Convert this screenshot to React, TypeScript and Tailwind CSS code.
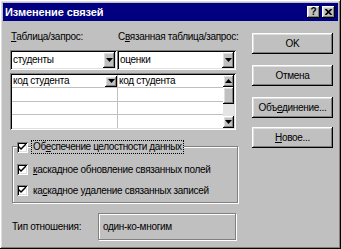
import React from "react";

const raised =
  "shadow-[inset_-1px_-1px_#000,inset_1px_1px_#fff,inset_-2px_-2px_#808080,inset_2px_2px_#dfdfdf]";
const sunken =
  "shadow-[inset_1px_1px_#808080,inset_-1px_-1px_#fff,inset_2px_2px_#000,inset_-2px_-2px_#dfdfdf]";

function Down() {
  return (
    <svg width="7" height="4" viewBox="0 0 7 4">
      <polygon points="0,0 7,0 3.5,4" fill="#000" />
    </svg>
  );
}
function Up() {
  return (
    <svg width="7" height="4" viewBox="0 0 7 4">
      <polygon points="0,4 7,4 3.5,0" fill="#000" />
    </svg>
  );
}

function DropBtn({ h }: { h: string }) {
  return (
    <div className={`w-[12px] ${h} shrink-0 bg-[#c0c0c0] flex items-center justify-center ${raised}`}>
      <Down />
    </div>
  );
}

function Check() {
  return (
    <div className={`w-[11px] h-[11px] shrink-0 bg-white flex items-center justify-center ${sunken}`}>
      <svg width="7" height="7" viewBox="0 0 7 7">
        <path d="M0 2 L0 4 L2 6 L7 1 L7 -1 L2 4 Z" fill="#000" />
      </svg>
    </div>
  );
}

function Btn({ children, cls = "" }: { children: React.ReactNode; cls?: string }) {
  return (
    <div className={`w-[81px] h-[21px] bg-[#c0c0c0] flex items-center justify-center whitespace-nowrap ${raised} ${cls}`}>
      {children}
    </div>
  );
}

export default function App() {
  return (
    <div
      className={`w-[341px] h-[249px] bg-[#c0c0c0] text-black text-[10px] tracking-[-0.3px] leading-none ${raised} p-[3px] flex flex-col`}
      style={{ fontFamily: '"Liberation Sans", Arial, sans-serif' }}
    >
      {/* Title bar */}
      <div className="h-[18px] bg-[#000080] flex items-center pl-[2px] pr-[3px]">
        <span className="text-white font-bold text-[11px] tracking-[-0.1px] flex-1 whitespace-nowrap">Изменение связей</span>
        <div className={`w-[13px] h-[12px] bg-[#c0c0c0] flex items-center justify-center font-bold text-[10px] tracking-normal ${raised}`}>
          ?
        </div>
        <div className={`ml-[2px] w-[13px] h-[12px] bg-[#c0c0c0] flex items-center justify-center ${raised}`}>
          <svg width="7" height="6" viewBox="0 0 7 6">
            <path d="M0.5 0 L6.5 6 M6.5 0 L0.5 6" stroke="#000" strokeWidth="1.6" />
          </svg>
        </div>
      </div>

      <div className="flex pl-[7px]">
        {/* Left column */}
        <div className="w-[226px] flex flex-col">
          <div className="mt-[10px] h-[12px] flex items-center whitespace-nowrap">
            <span className="w-[107px] shrink-0 pl-[1px]">
              <u>Т</u>аблица/запрос:
            </span>
            <span className="pl-[1px]">
              С<u>в</u>язанная таблица/запрос:
            </span>
          </div>

          <div className="mt-[7px] flex">
            <div className={`w-[107px] h-[20px] bg-white flex items-center pl-[3px] pr-[2px] ${sunken}`}>
              <span className="flex-1">студенты</span>
              <DropBtn h="h-[16px]" />
            </div>
            <div className={`w-[119px] h-[20px] bg-white flex items-center pl-[3px] pr-[2px] ${sunken}`}>
              <span className="flex-1">оценки</span>
              <DropBtn h="h-[16px]" />
            </div>
          </div>

          {/* Grid */}
          <div className={`mt-[3px] h-[57px] bg-white p-[2px] flex ${sunken}`}>
            <div className="w-[105px] flex flex-col">
              <div className="h-[12px] flex items-center pl-[1px] border-b border-[#c0c0c0] box-content">
                <span className="flex-1 whitespace-nowrap">код студента</span>
                <DropBtn h="h-[11px]" />
              </div>
              <div className="h-[14px] border-b border-[#c0c0c0]" />
              <div className="h-[13px] border-b border-[#c0c0c0]" />
            </div>
            <div className="w-[1px] bg-[#c0c0c0]" />
            <div className="w-[105px] flex flex-col">
              <div className="h-[12px] flex items-center pl-[1px] border-b border-[#c0c0c0] box-content">
                <span className="whitespace-nowrap">код студента</span>
              </div>
              <div className="h-[14px] border-b border-[#c0c0c0]" />
              <div className="h-[13px] border-b border-[#c0c0c0]" />
            </div>
            <div className="w-[11px] flex flex-col bg-[#e4e4e4]">
              <div className={`h-[12px] bg-[#c0c0c0] flex items-center justify-center ${raised}`}>
                <Up />
              </div>
              <div className={`h-[17px] bg-[#c0c0c0] ${raised}`} />
              <div className="flex-1" />
              <div className={`h-[12px] bg-[#c0c0c0] flex items-center justify-center ${raised}`}>
                <Down />
              </div>
            </div>
          </div>

          {/* Group box */}
          <div className="mt-[16px] ml-[2px] w-[226px] h-[57px] border border-[#808080] shadow-[inset_1px_1px_#fff,1px_1px_#fff] flex flex-col pl-[4px] whitespace-nowrap">
            <div className="-mt-[7px] h-[14px] flex items-center">
              <Check />
              <span className="ml-[3px] h-[14px] px-[1px] flex items-center bg-[#c0c0c0] border border-dotted border-black tracking-[-0.4px]">
                Об<u>е</u>спечение целостности данных
              </span>
            </div>
            <div className="mt-[10px] h-[11px] flex items-center">
              <Check />
              <span className="ml-[5px]">
                <u>к</u>аскадное обновление связанных полей
              </span>
            </div>
            <div className="mt-[10px] h-[11px] flex items-center">
              <Check />
              <span className="ml-[5px]">
                ка<u>с</u>кадное удаление связанных записей
              </span>
            </div>
          </div>

          {/* Relationship type */}
          <div className="mt-[10px] ml-[2px] flex items-center whitespace-nowrap">
            <span className="w-[86px] shrink-0">Тип отношения:</span>
            <div className="w-[140px] h-[27px] border border-[#808080] shadow-[inset_1px_1px_#fff,1px_1px_#fff] flex items-center pl-[4px]">
              один-ко-многим
            </div>
          </div>
        </div>

        {/* Right column */}
        <div className="ml-[16px] mt-[12px] flex flex-col">
          <Btn>OK</Btn>
          <Btn cls="mt-[11px]">Отмена</Btn>
          <Btn cls="mt-[11px]">
            <span>
              Объ<u>е</u>динение...
            </span>
          </Btn>
          <Btn cls="mt-[9px]">
            <span>
              <u>Н</u>овое...
            </span>
          </Btn>
        </div>
      </div>
    </div>
  );
}
